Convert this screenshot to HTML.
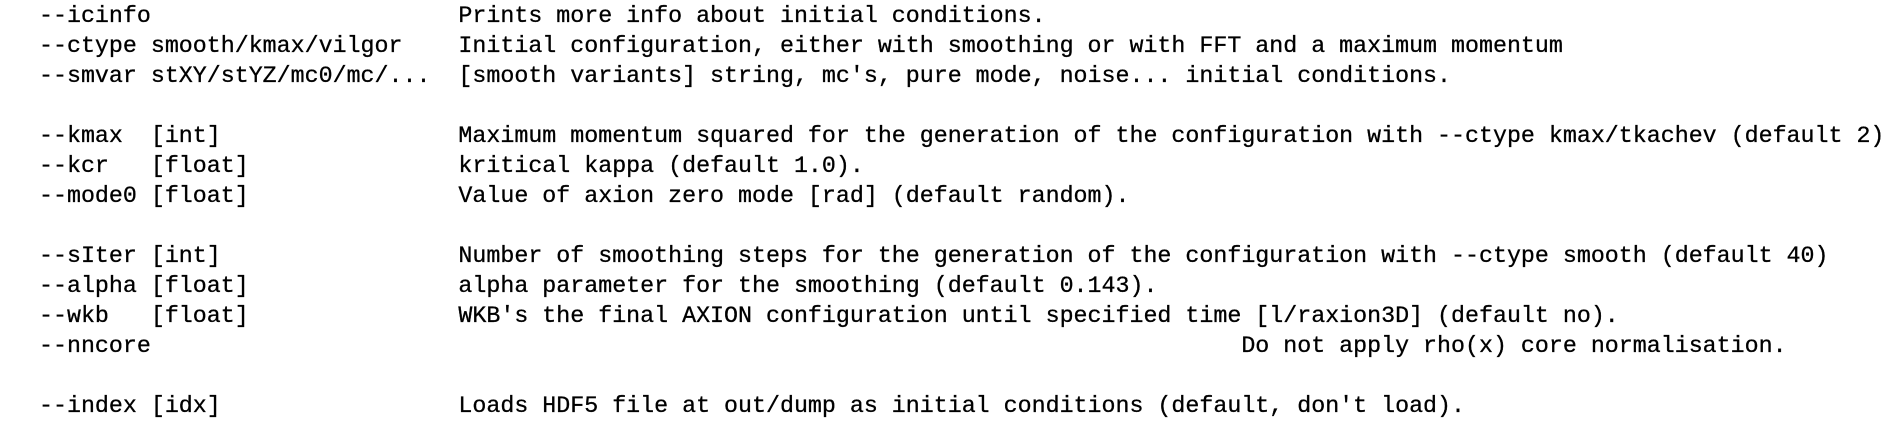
<!DOCTYPE html>
<html><head><meta charset="utf-8"><style>
html,body{margin:0;padding:0;background:#fff;width:1904px;height:434px;overflow:hidden}
pre{margin:0;position:absolute;left:39px;top:1px;font-family:"Liberation Mono",monospace;font-size:23.3px;line-height:30px;color:#000;-webkit-text-stroke:0.3px #000}
</style></head><body><pre>--icinfo                      Prints more info about initial conditions.
--ctype smooth/kmax/vilgor    Initial configuration, either with smoothing or with FFT and a maximum momentum
--smvar stXY/stYZ/mc0/mc/...  [smooth variants] string, mc's, pure mode, noise... initial conditions.

--kmax  [int]                 Maximum momentum squared for the generation of the configuration with --ctype kmax/tkachev (default 2)
--kcr   [float]               kritical kappa (default 1.0).
--mode0 [float]               Value of axion zero mode [rad] (default random).

--sIter [int]                 Number of smoothing steps for the generation of the configuration with --ctype smooth (default 40)
--alpha [float]               alpha parameter for the smoothing (default 0.143).
--wkb   [float]               WKB's the final AXION configuration until specified time [l/raxion3D] (default no).
--nncore                                                                              Do not apply rho(x) core normalisation.

--index [idx]                 Loads HDF5 file at out/dump as initial conditions (default, don't load).</pre></body></html>
